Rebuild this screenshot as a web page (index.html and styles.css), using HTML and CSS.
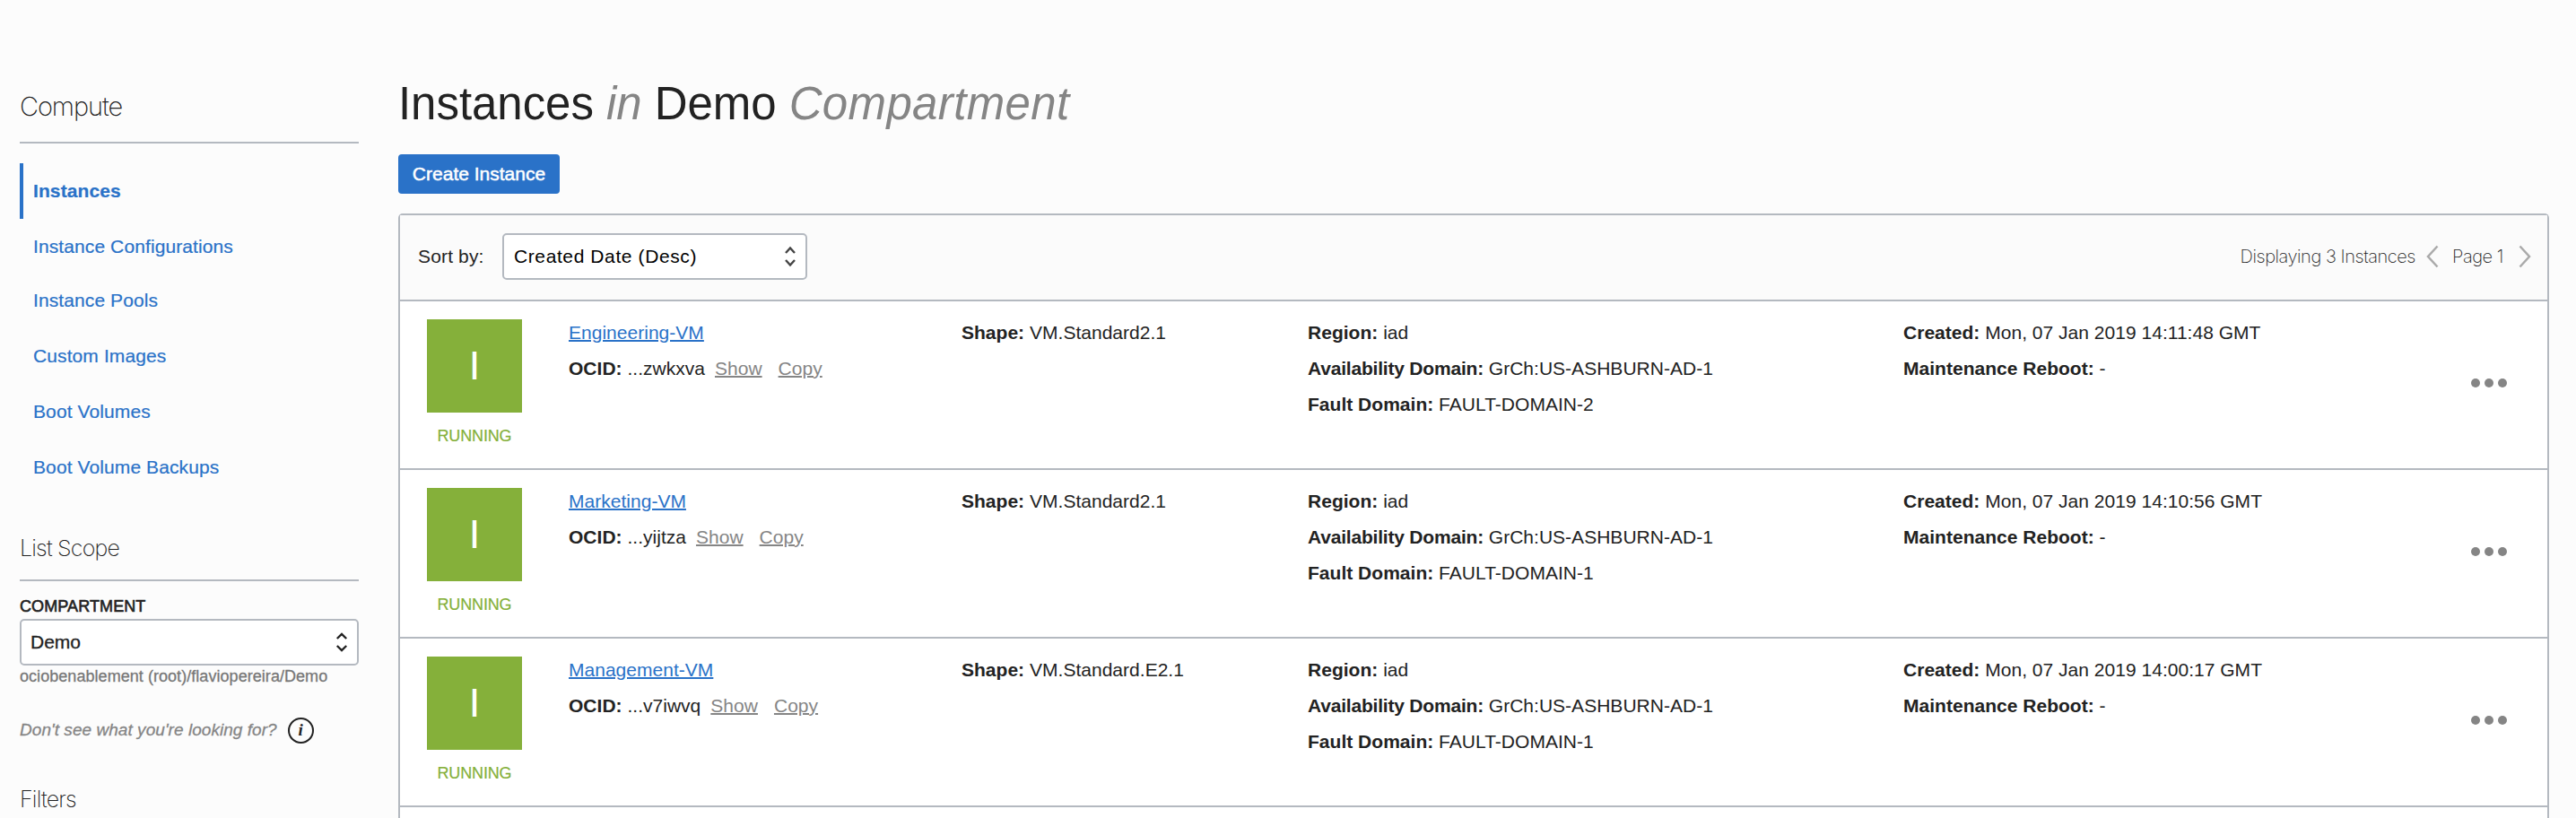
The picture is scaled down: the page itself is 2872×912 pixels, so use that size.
FILE: index.html
```html
<!DOCTYPE html>
<html lang="en">
<head>
<meta charset="utf-8">
<title>Instances</title>
<link rel="stylesheet" href="styles.css">
</head>
<body>
<div class="page">
  <aside class="sidebar">
    <h2 class="side-title">Compute</h2>
    <nav class="side-nav">
      <a class="nav-item active">Instances</a>
      <a class="nav-item short">Instance Configurations</a>
      <a class="nav-item">Instance Pools</a>
      <a class="nav-item">Custom Images</a>
      <a class="nav-item">Boot Volumes</a>
      <a class="nav-item">Boot Volume Backups</a>
    </nav>
    <h3 class="side-subtitle scope">List Scope</h3>
    <div class="field-label">COMPARTMENT</div>
    <div class="select side-select">
      <span>Demo</span>
      <svg class="updown" width="14" height="24" viewBox="0 0 14 24"><path d="M1.800 8 7 3l5.200 5M1.800 16 7 21l5.200-5"/></svg>
    </div>
    <div class="path">ociobenablement (root)/flaviopereira/Demo</div>
    <div class="hint">
      <span>Don't see what you're looking for?</span>
      <span class="info">i</span>
    </div>
    <h3 class="side-subtitle filters">Filters</h3>
  </aside>

  <main class="main">
    <h1 class="title">Instances <em>in</em> Demo <em class="kind">Compartment</em></h1>
    <button class="create">Create Instance</button>
    <section class="panel">
      <header class="toolbar">
        <span class="sort-label">Sort by:</span>
        <div class="select sort-select">
          <span>Created Date (Desc)</span>
          <svg class="updown soft" width="14" height="24" viewBox="0 0 14 24"><path d="M2 8 7 2.500l5 5.500M2 16 7 21.500l5-5.500"/></svg>
        </div>
        <div class="pager">
          <span class="count">Displaying 3 Instances</span>
          <svg class="arrow" width="14" height="26" viewBox="0 0 14 26"><path d="M12.500 1.500 2 13l10.500 11.500"/></svg>
          <span class="page-no">Page 1</span>
          <svg class="arrow" width="14" height="26" viewBox="0 0 14 26"><path d="M1.500 1.500 12 13 1.500 24.500"/></svg>
        </div>
      </header>

      <article class="row">
        <div class="status"><div class="tile">I</div><div class="state">RUNNING</div></div>
        <div class="cell">
          <div><a class="name">Engineering-VM</a></div>
          <div><b>OCID:</b> ...zwkxva<a class="act show">Show</a><a class="act copy">Copy</a></div>
        </div>
        <div class="cell"><div><b>Shape:</b> VM.Standard2.1</div></div>
        <div class="cell">
          <div><b>Region:</b> iad</div>
          <div><b class="ad">Availability Domain:</b> GrCh:US-ASHBURN-AD-1</div>
          <div><b>Fault Domain:</b> FAULT-DOMAIN-2</div>
        </div>
        <div class="cell">
          <div><b>Created:</b> Mon, 07 Jan 2019 14:11:48 GMT</div>
          <div><b>Maintenance Reboot:</b> -</div>
        </div>
        <div class="more"><i></i><i></i><i></i></div>
      </article>

      <article class="row">
        <div class="status"><div class="tile">I</div><div class="state">RUNNING</div></div>
        <div class="cell">
          <div><a class="name">Marketing-VM</a></div>
          <div><b>OCID:</b> ...yijtza<a class="act show">Show</a><a class="act copy">Copy</a></div>
        </div>
        <div class="cell"><div><b>Shape:</b> VM.Standard2.1</div></div>
        <div class="cell">
          <div><b>Region:</b> iad</div>
          <div><b class="ad">Availability Domain:</b> GrCh:US-ASHBURN-AD-1</div>
          <div><b>Fault Domain:</b> FAULT-DOMAIN-1</div>
        </div>
        <div class="cell">
          <div><b>Created:</b> Mon, 07 Jan 2019 14:10:56 GMT</div>
          <div><b>Maintenance Reboot:</b> -</div>
        </div>
        <div class="more"><i></i><i></i><i></i></div>
      </article>

      <article class="row">
        <div class="status"><div class="tile">I</div><div class="state">RUNNING</div></div>
        <div class="cell">
          <div><a class="name">Management-VM</a></div>
          <div><b>OCID:</b> ...v7iwvq<a class="act show">Show</a><a class="act copy">Copy</a></div>
        </div>
        <div class="cell"><div><b>Shape:</b> VM.Standard.E2.1</div></div>
        <div class="cell">
          <div><b>Region:</b> iad</div>
          <div><b class="ad">Availability Domain:</b> GrCh:US-ASHBURN-AD-1</div>
          <div><b>Fault Domain:</b> FAULT-DOMAIN-1</div>
        </div>
        <div class="cell">
          <div><b>Created:</b> Mon, 07 Jan 2019 14:00:17 GMT</div>
          <div><b>Maintenance Reboot:</b> -</div>
        </div>
        <div class="more"><i></i><i></i><i></i></div>
      </article>
      <footer class="panel-foot"></footer>
    </section>
  </main>
</div>
</body>
</html>
```
FILE: styles.css
```css
* { box-sizing: border-box; }

body {
  margin: 0;
  background: #fcfcfc;
  color: #222;
  font: 21px "Liberation Sans", Arial, sans-serif;
}

.page {
  display: flex;
  gap: 44px;
  height: 912px;
  padding: 0 30px 0 22px;
  overflow: hidden;
}

/* Sidebar */
.sidebar {
  flex: none;
  width: 378px;
  padding-top: 98px;
}

.side-title,
.side-subtitle {
  margin: 0;
  font-family: Inter, "Liberation Sans", sans-serif;
  font-weight: 200;
}

.side-title {
  height: 62px;
  border-bottom: 2px solid #b4b9c0;
  font-size: 29px;
  line-height: 41px;
  letter-spacing: -1.1px;
}

.side-nav {
  display: flex;
  flex-direction: column;
  padding-top: 22px;
}

.nav-item {
  height: 62px;
  padding-left: 15px;
  line-height: 62px;
  letter-spacing: 0.1px;
  color: #2a72c8;
  -webkit-text-stroke: 0.2px #2a72c8;
}

.nav-item.short { height: 60px; }

.nav-item.active {
  padding-left: 11px;
  border-left: 4px solid #2a72c8;
  font-weight: 700;
}

.side-subtitle {
  font-size: 25px;
  line-height: 41px;
  letter-spacing: -0.8px;
}

.scope {
  height: 57px;
  margin-top: 39px;
  border-bottom: 2px solid #b4b9c0;
}

.field-label {
  height: 42px;
  padding-top: 16px;
  font-size: 18px;
  line-height: 24px;
  letter-spacing: 0.1px;
  -webkit-text-stroke: 0.6px #222;
}

.select {
  display: flex;
  align-items: center;
  justify-content: space-between;
  height: 52px;
  border: 2px solid #b4b9c0;
  border-radius: 5px;
  background: #fff;
}

.side-select {
  padding: 0 10px 0 10px;
  -webkit-text-stroke: 0.3px #222;
}

.updown {
  fill: none;
  stroke: #222;
  stroke-width: 2.4;
}

.updown.soft { stroke: #444; }

.path {
  margin-top: 1px;
  font-size: 18px;
  line-height: 22px;
  letter-spacing: 0.05px;
  color: #777;
  -webkit-text-stroke: 0.3px #777;
}

.hint {
  display: flex;
  align-items: center;
  gap: 12px;
  height: 30px;
  margin-top: 34px;
  font-size: 19px;
  line-height: 24px;
  letter-spacing: 0.05px;
  font-style: italic;
  color: #858585;
  -webkit-text-stroke: 0.3px #858585;
}

.info {
  width: 29px;
  height: 29px;
  border: 2px solid #222;
  border-radius: 50%;
  font: italic bold 19px/24px "Liberation Serif", serif;
  text-align: center;
  color: #222;
  -webkit-text-stroke: 0;
}

.filters { margin-top: 42px; }

/* Main column */
.main {
  flex: 1;
  display: flex;
  flex-direction: column;
  align-items: flex-start;
  padding-top: 86px;
}

.title {
  margin: 0;
  font-size: 51px;
  font-weight: 400;
  line-height: 60px;
  letter-spacing: -0.05px;
}

.title em { color: #858585; }

.title .kind { letter-spacing: 0.35px; }

.create {
  width: 180px;
  height: 44px;
  margin: 26px 0 22px;
  padding: 0;
  border: 0;
  border-radius: 4px;
  background: #2a72c8;
  color: #fff;
  font: inherit;
  -webkit-text-stroke: 0.5px #fff;
}

.panel {
  flex: 1;
  align-self: stretch;
  border: 2px solid #b4b9c0;
  border-bottom: 0;
  border-radius: 5px 5px 0 0;
  background: #fff;
}

.toolbar {
  display: flex;
  align-items: center;
  height: 94px;
  padding: 0 18px 2px 20px;
  background: #fbfbfb;
}

.sort-label {
  width: 94px;
  letter-spacing: 0.15px;
}

.sort-select {
  width: 340px;
  padding: 0 10px 0 11px;
  color: #000;
  letter-spacing: 0.6px;
}

.pager {
  display: flex;
  align-items: center;
  margin-left: auto;
  font-family: Inter, "Liberation Sans", sans-serif;
  font-weight: 200;
  font-size: 20px;
  letter-spacing: -0.45px;
}

.count { margin-right: 12px; }

.page-no { margin: 0 17px 0 15px; }

.arrow {
  fill: none;
  stroke: #aaa;
  stroke-width: 2.5;
}

.row {
  display: grid;
  grid-template-columns: 158px 438px 386px 664px 633px 1fr;
  height: 188px;
  padding-left: 30px;
  border-top: 2px solid #b4b9c0;
}

.status {
  width: 106px;
  padding-top: 20px;
  text-align: center;
}

.tile {
  height: 104px;
  background: #85b03a;
  color: #fff;
  font-size: 45px;
  line-height: 103px;
}

.state {
  margin-top: 14px;
  font-size: 18px;
  line-height: 24px;
  letter-spacing: -0.15px;
  color: #85b03a;
  -webkit-text-stroke: 0.2px #85b03a;
}

.cell {
  padding-top: 15px;
  line-height: 40px;
  letter-spacing: 0.02px;
  white-space: nowrap;
}

.ad { letter-spacing: -0.2px; }

.name {
  color: #2a72c8;
  text-decoration: underline;
  text-decoration-thickness: 2px;
}

.act {
  color: #858585;
  text-decoration: underline;
  text-decoration-thickness: 2px;
}

.show { margin-left: 11px; }

.copy { margin-left: 18px; }

.more {
  display: flex;
  gap: 5px;
  padding-top: 86px;
}

.more i {
  width: 10px;
  height: 10px;
  border-radius: 50%;
  background: #858585;
}

.panel-foot { border-top: 2px solid #b4b9c0; }
```
